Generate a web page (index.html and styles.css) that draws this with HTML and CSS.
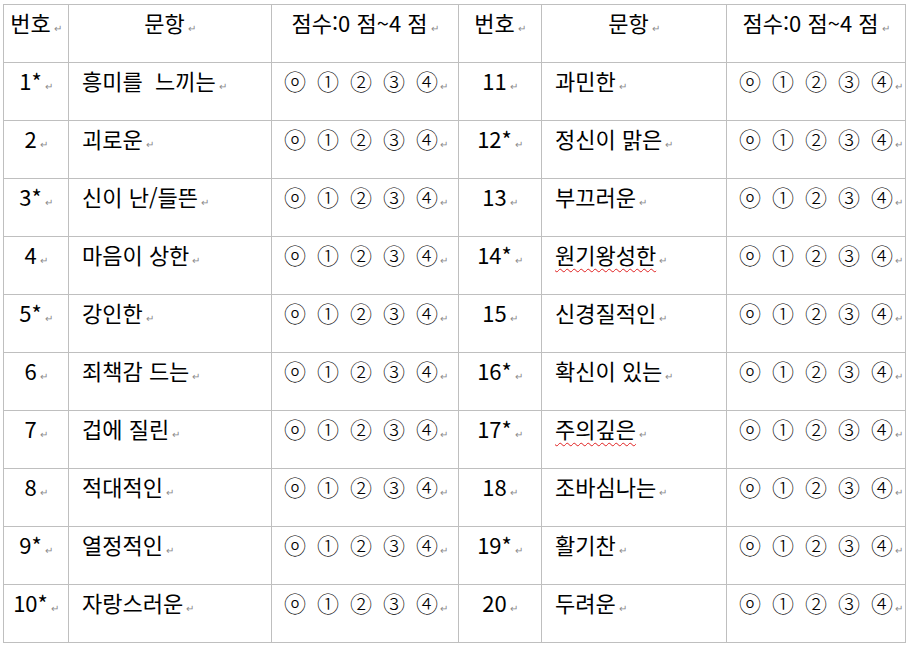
FILE: index.html
```html
<!DOCTYPE html>
<html lang="ko">
<head>
<meta charset="utf-8">
<link rel="stylesheet" href="styles.css">
</head>
<body>
<div class="page">
<table class="survey">
  <colgroup>
    <col class="c-no"><col class="c-item"><col class="c-score">
    <col class="c-no2"><col class="c-item2"><col class="c-score2">
  </colgroup>
  <thead>
    <tr>
      <th>번호<span class="pm">↵</span></th>
      <th>문항<span class="pm">↵</span></th>
      <th>점수:0 점~4 점<span class="pm">↵</span></th>
      <th>번호<span class="pm">↵</span></th>
      <th>문항<span class="pm">↵</span></th>
      <th>점수:0 점~4 점<span class="pm">↵</span></th>
    </tr>
  </thead>
  <tbody>
    <tr>
      <td class="no">1*<span class="pm">↵</span></td><td class="item">흥미를&nbsp; 느끼는<span class="pm">↵</span></td>
      <td class="score"><span class="sc">ⓞ</span><span class="sc">①</span><span class="sc">②</span><span class="sc">③</span><span class="sc">④</span><span class="pm">↵</span></td>
      <td class="no">11<span class="pm">↵</span></td><td class="item">과민한<span class="pm">↵</span></td>
      <td class="score"><span class="sc">ⓞ</span><span class="sc">①</span><span class="sc">②</span><span class="sc">③</span><span class="sc">④</span><span class="pm">↵</span></td>
    </tr>
    <tr>
      <td class="no">2<span class="pm">↵</span></td><td class="item">괴로운<span class="pm">↵</span></td>
      <td class="score"><span class="sc">ⓞ</span><span class="sc">①</span><span class="sc">②</span><span class="sc">③</span><span class="sc">④</span><span class="pm">↵</span></td>
      <td class="no">12*<span class="pm">↵</span></td><td class="item">정신이 맑은<span class="pm">↵</span></td>
      <td class="score"><span class="sc">ⓞ</span><span class="sc">①</span><span class="sc">②</span><span class="sc">③</span><span class="sc">④</span><span class="pm">↵</span></td>
    </tr>
    <tr>
      <td class="no">3*<span class="pm">↵</span></td><td class="item">신이 난/들뜬<span class="pm">↵</span></td>
      <td class="score"><span class="sc">ⓞ</span><span class="sc">①</span><span class="sc">②</span><span class="sc">③</span><span class="sc">④</span><span class="pm">↵</span></td>
      <td class="no">13<span class="pm">↵</span></td><td class="item">부끄러운<span class="pm">↵</span></td>
      <td class="score"><span class="sc">ⓞ</span><span class="sc">①</span><span class="sc">②</span><span class="sc">③</span><span class="sc">④</span><span class="pm">↵</span></td>
    </tr>
    <tr>
      <td class="no">4<span class="pm">↵</span></td><td class="item">마음이 상한<span class="pm">↵</span></td>
      <td class="score"><span class="sc">ⓞ</span><span class="sc">①</span><span class="sc">②</span><span class="sc">③</span><span class="sc">④</span><span class="pm">↵</span></td>
      <td class="no">14*<span class="pm">↵</span></td><td class="item"><span class="spell">원기왕성한</span><span class="pm">↵</span></td>
      <td class="score"><span class="sc">ⓞ</span><span class="sc">①</span><span class="sc">②</span><span class="sc">③</span><span class="sc">④</span><span class="pm">↵</span></td>
    </tr>
    <tr>
      <td class="no">5*<span class="pm">↵</span></td><td class="item">강인한<span class="pm">↵</span></td>
      <td class="score"><span class="sc">ⓞ</span><span class="sc">①</span><span class="sc">②</span><span class="sc">③</span><span class="sc">④</span><span class="pm">↵</span></td>
      <td class="no">15<span class="pm">↵</span></td><td class="item">신경질적인<span class="pm">↵</span></td>
      <td class="score"><span class="sc">ⓞ</span><span class="sc">①</span><span class="sc">②</span><span class="sc">③</span><span class="sc">④</span><span class="pm">↵</span></td>
    </tr>
    <tr>
      <td class="no">6<span class="pm">↵</span></td><td class="item">죄책감 드는<span class="pm">↵</span></td>
      <td class="score"><span class="sc">ⓞ</span><span class="sc">①</span><span class="sc">②</span><span class="sc">③</span><span class="sc">④</span><span class="pm">↵</span></td>
      <td class="no">16*<span class="pm">↵</span></td><td class="item">확신이 있는<span class="pm">↵</span></td>
      <td class="score"><span class="sc">ⓞ</span><span class="sc">①</span><span class="sc">②</span><span class="sc">③</span><span class="sc">④</span><span class="pm">↵</span></td>
    </tr>
    <tr>
      <td class="no">7<span class="pm">↵</span></td><td class="item">겁에 질린<span class="pm">↵</span></td>
      <td class="score"><span class="sc">ⓞ</span><span class="sc">①</span><span class="sc">②</span><span class="sc">③</span><span class="sc">④</span><span class="pm">↵</span></td>
      <td class="no">17*<span class="pm">↵</span></td><td class="item"><span class="spell">주의깊은</span><span class="pm">↵</span></td>
      <td class="score"><span class="sc">ⓞ</span><span class="sc">①</span><span class="sc">②</span><span class="sc">③</span><span class="sc">④</span><span class="pm">↵</span></td>
    </tr>
    <tr>
      <td class="no">8<span class="pm">↵</span></td><td class="item">적대적인<span class="pm">↵</span></td>
      <td class="score"><span class="sc">ⓞ</span><span class="sc">①</span><span class="sc">②</span><span class="sc">③</span><span class="sc">④</span><span class="pm">↵</span></td>
      <td class="no">18<span class="pm">↵</span></td><td class="item">조바심나는<span class="pm">↵</span></td>
      <td class="score"><span class="sc">ⓞ</span><span class="sc">①</span><span class="sc">②</span><span class="sc">③</span><span class="sc">④</span><span class="pm">↵</span></td>
    </tr>
    <tr>
      <td class="no">9*<span class="pm">↵</span></td><td class="item">열정적인<span class="pm">↵</span></td>
      <td class="score"><span class="sc">ⓞ</span><span class="sc">①</span><span class="sc">②</span><span class="sc">③</span><span class="sc">④</span><span class="pm">↵</span></td>
      <td class="no">19*<span class="pm">↵</span></td><td class="item">활기찬<span class="pm">↵</span></td>
      <td class="score"><span class="sc">ⓞ</span><span class="sc">①</span><span class="sc">②</span><span class="sc">③</span><span class="sc">④</span><span class="pm">↵</span></td>
    </tr>
    <tr>
      <td class="no">10*<span class="pm">↵</span></td><td class="item">자랑스러운<span class="pm">↵</span></td>
      <td class="score"><span class="sc">ⓞ</span><span class="sc">①</span><span class="sc">②</span><span class="sc">③</span><span class="sc">④</span><span class="pm">↵</span></td>
      <td class="no">20<span class="pm">↵</span></td><td class="item">두려운<span class="pm">↵</span></td>
      <td class="score"><span class="sc">ⓞ</span><span class="sc">①</span><span class="sc">②</span><span class="sc">③</span><span class="sc">④</span><span class="pm">↵</span></td>
    </tr>
  </tbody>
</table>
</div>
</body>
</html>
```

FILE: styles.css
```css
html, body {
  margin: 0;
  padding: 0;
  background: #ffffff;
}

.page {
  padding: 4px 0 0 3px;
}

.survey {
  border-collapse: collapse;
  table-layout: fixed;
  width: 902px;
  font-family: "Noto Sans CJK KR", "Noto Sans", sans-serif;
  font-size: 22px;
  font-weight: 400;
  color: #000;
}

.c-no { width: 65px; }
.c-item { width: 203px; }
.c-score { width: 187px; }
.c-no2 { width: 83px; }
.c-item2 { width: 185px; }
.c-score2 { width: 179px; }

.survey tr {
  height: 58px;
}

.survey th,
.survey td {
  border: 1px solid #bfbfbf;
  padding: 2px 0 0 0;
  vertical-align: top;
  line-height: 30px;
  font-weight: 400;
  white-space: nowrap;
  overflow: hidden;
}

.survey th {
  text-align: center;
}

.survey td.no {
  text-align: center;
}

.survey td.item {
  text-align: left;
  padding-left: 13px;
}

.survey td.score {
  text-align: left;
  padding-left: 12px;
}

.sc {
  display: inline-block;
  width: 21px;
  margin-right: 12px;
  text-align: center;
  font-weight: 300;
}

.sc:nth-last-child(2) {
  margin-right: 0;
}

.pm {
  font-size: 10px;
  color: #8a8a8a;
  margin-left: 3px;
  vertical-align: baseline;
}

.spell {
  text-decoration: underline wavy #e02020;
  text-decoration-thickness: 1px;
  text-underline-offset: 4px;
}
```
